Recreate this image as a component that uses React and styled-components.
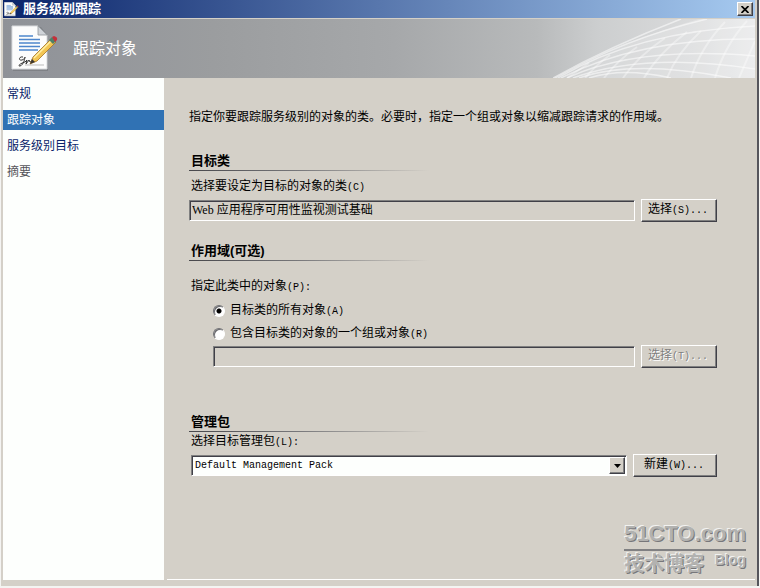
import React, { useState } from "react";
import styled, { createGlobalStyle, css } from "styled-components";

const face = "#d4d0c8";

const GlobalStyle = createGlobalStyle`
  * { box-sizing: border-box; }
  body {
    margin: 0;
    background: #f4f4f2;
    font: 12px/16px "Liberation Sans", "Noto Sans CJK SC", sans-serif;
    color: #000;
  }
  button, input, select { font: inherit; color: inherit; margin: 0; border-radius: 0; }
`;

const Desktop = styled.div`
  min-height: 100vh;
  display: flex;
  padding: 0 1px 2px;
`;

const Window = styled.div`
  flex: 1;
  display: flex;
  flex-direction: column;
  background: ${face};
  padding: 0 2px 6px;
  border-right: 2px solid #55555c;
`;

const TitleBar = styled.header`
  height: 18px;
  display: flex;
  align-items: center;
  gap: 4px;
  padding: 0 2px 0 1px;
  background: linear-gradient(90deg, #0a246a, #a6caf0);
  color: #fff;
`;

const WindowTitle = styled.h1`
  flex: 1;
  margin: 0;
  font-size: 13px;
  line-height: 18px;
  font-weight: 700;
`;

const raised = css`
  background: ${face};
  border: 1px solid;
  border-color: #fff #404048 #404048 #fff;
  box-shadow: inset -1px -1px #808080;
`;

const sunken = css`
  border: 1px solid;
  border-color: #808080 #fff #fff #808080;
  box-shadow: inset 1px 1px #404048;
`;

const CloseButton = styled.button`
  ${raised}
  width: 16px;
  height: 14px;
  padding: 0;
  display: grid;
  place-items: center;
`;

const Banner = styled.div`
  height: 60px;
  display: flex;
  align-items: center;
  border-top: 1px solid ${face};
  background: linear-gradient(90deg, #8f9298 0%, #9b9d9f 28%, #a6a8aa 52%, #b8babb 71%, #cccecf 79%, #dadbdc 92%, #e8e9ea 100%);
`;

const BannerTitle = styled.h2`
  flex: 1;
  margin: 0 0 0 14px;
  font-size: 16px;
  line-height: 24px;
  font-weight: 400;
  color: #fff;
`;

const DocIcon = styled.svg`
  width: ${(p) => p.$size}px;
  height: ${(p) => p.$size}px;
  flex: none;
  margin-left: ${(p) => p.$inset || 0}px;
`;

const Waves = styled.svg`
  width: 202px;
  height: 59px;
  flex: none;
`;

const Body = styled.div`
  flex: 1;
  display: flex;
`;

const Sidebar = styled.nav`
  width: 161px;
  flex: none;
  background: #fdfffd;
  padding-top: 6px;
  display: flex;
  flex-direction: column;
  gap: 6px;
`;

const SideLink = styled.a`
  height: 20px;
  padding: 0 4px;
  line-height: 21px;
  text-decoration: none;
  color: ${(p) => (p.$active ? "#fff" : p.$muted ? "#55555a" : "#0a246a")};
  background: ${(p) => (p.$active ? "#3072b4" : "transparent")};
`;

const Main = styled.main`
  flex: 1;
  min-width: 0;
  position: relative;
  margin-left: 3px;
  padding: 31px 38px 0 22px;
  border-bottom: 1px solid #fff;
`;

const Intro = styled.p`
  margin: 0 0 27px;
  white-space: nowrap;
`;

const Section = styled.section`
  margin-bottom: ${(p) => p.$after}px;
`;

const Heading = styled.h3`
  width: 240px;
  margin: 0 0 ${(p) => p.$after}px;
  padding: 0 2px;
  height: 19px;
  font-size: 13px;
  line-height: 17px;
  font-weight: 700;
  background: linear-gradient(90deg, #48484c, #77777a 45%, ${face}) left bottom / 100% 1px no-repeat;
`;

const Label = styled.label`
  display: block;
  padding-left: 2px;
`;

const Latin = styled.span`
  font-family: "Liberation Mono", monospace;
  font-size: 10px;
`;

const Fields = styled.fieldset`
  border: 0;
  margin: 0;
  padding: 0;
  min-width: 0;
`;

const Legend = styled.legend`
  padding: 0 2px;
  margin-bottom: 3px;
`;

const RadioRow = styled.label`
  display: flex;
  align-items: center;
  gap: 5px;
  height: 23px;
  padding-left: 24px;
`;

const Radio = styled.input`
  appearance: none;
  width: 12px;
  height: 12px;
  border-radius: 50%;
  border: 1px solid;
  border-color: #707074 #fff #fff #707074;
  background: ${(p) =>
    p.checked ? "radial-gradient(circle, #000 0 2px, #fff 3px)" : "#fff"};
  box-shadow: inset 1px 1px #68686c;
`;

const FieldRow = styled.div`
  display: flex;
  align-items: center;
  gap: 6px;
  margin-top: ${(p) => p.$before || 0}px;
  padding-left: ${(p) => p.$indent || 0}px;
`;

const TextBox = styled.input`
  ${sunken}
  flex: 1;
  min-width: 0;
  height: 21px;
  padding: 0 2px 3px;
  background: ${face};
  font-family: "Liberation Serif", "Noto Sans CJK SC", serif;
  outline: none;
`;

const PushButton = styled.button`
  ${raised}
  flex: none;
  width: ${(p) => p.$width || 76}px;
  height: 23px;
  padding: 0 2px 1px 0;
  line-height: 18px;
  &:disabled {
    color: #808080;
    text-shadow: 1px 1px #fff;
  }
`;

const Picker = styled.div`
  position: relative;
  flex: 1;
  min-width: 0;
  display: flex;
`;

const Select = styled.select`
  ${sunken}
  appearance: none;
  width: 100%;
  height: 21px;
  padding: 0 20px 0 3px;
  background: #fdfffd;
  font-family: "Liberation Mono", monospace;
  font-size: 10px;
  outline: none;
`;

const PickerArrow = styled.span`
  ${raised}
  position: absolute;
  top: 2px;
  right: 2px;
  bottom: 2px;
  width: 16px;
  display: grid;
  place-items: center;
  pointer-events: none;
`;

const Watermark = styled.div`
  position: absolute;
  right: 9px;
  bottom: 2px;
  color: #b2b2b0;
  text-shadow: -1px -1px #f2f2f0, 1px 1px #77777a;
  font-weight: 700;
`;

const Brand = styled.div`
  font-size: 22px;
  line-height: 30px;
  white-space: nowrap;
  border-bottom: 2px solid #808082;
`;

const BrandRow = styled.div`
  display: flex;
  justify-content: space-between;
  font-size: 14px;
  line-height: 18px;
`;

const BrandName = styled.span`
  font-size: 20px;
  line-height: 26px;
`;

function Document({ size, inset }) {
  return (
    <DocIcon $size={size} $inset={inset} viewBox="0 0 48 48" aria-hidden="true">
      <path d="M2 2h28l7 9v35H2z" fill="#6d6f73" opacity=".5" />
      <path d="M1 1h26l9 9v34H1z" fill="#fcfcfc" stroke="#d8dadd" />
      <path d="M27 1v9h9z" fill="#cfd3d8" stroke="#8f9499" strokeWidth=".8" />
      <path d="M8 11h14M8 14.500h21M8 18h21M8 21.500h21M8 25h19" stroke="#4e86cc" strokeWidth="1.700" />
      <path d="M12 32c-4-1-5 4-1 3 3-1 3-3 3-3s-1 8-5 9c-3 0 1-3 5-4l2-2-1 4 3-4 1 2 3-1" fill="none" stroke="#333" strokeWidth="1" />
      <path d="M14 40h19" stroke="#bbb" strokeWidth="1" />
      <path d="M19 39l3-7 19-19 4 4-19 19z" fill="#f3c553" stroke="#a37324" strokeWidth=".8" />
      <path d="M23 33l19-19" stroke="#fff0a5" strokeWidth="1.500" />
      <path d="M19 39l2-5 3 3z" fill="#3b3732" />
      <path d="M38 15l3-3 4 4-3 3z" fill="#4f8067" />
      <path d="M41 12l2-1q4 1 3 4l-2 2z" fill="#c5303a" />
    </DocIcon>
  );
}

function BannerWaves() {
  return (
    <Waves viewBox="0 0 202 59" aria-hidden="true">
      <path d="M0 59Q75 20 146 0H202V59Z" fill="#fff" opacity=".2" />
      <g fill="none" stroke="#fff" strokeWidth="1.500" opacity=".55">
        <path d="M0 59Q58 27 128 0" />
        <path d="M2 59Q70 20 154 0" />
        <path d="M5 59Q82 13 202 7" />
        <path d="M8 59Q87 19 202 20" />
        <path d="M14 59Q84 27 202 37" />
        <path d="M20 59Q92 33 202 50" />
        <path d="M26 59Q80 40 178 59" />
        <path d="M36 59Q70 48 118 59" />
      </g>
      <g fill="none" stroke="#fff" strokeWidth="2" opacity=".36">
        <path d="M14 59L36 44M32 59Q44 45 57 36M51 59Q64 42 84 28M70 59Q84 38 112 19M91 59Q105 35 134 13M114 59Q124 34 148 12M138 59Q148 28 172 3M162 59Q172 26 194 2M186 59L202 22" />
      </g>
    </Waves>
  );
}

const steps = [
  { name: "常规" },
  { name: "跟踪对象", active: true },
  { name: "服务级别目标" },
  { name: "摘要", muted: true },
];

export default function App() {
  const [scope, setScope] = useState("all");
  const [target, setTarget] = useState("Web 应用程序可用性监视测试基础");

  return (
    <Desktop>
      <GlobalStyle />
      <Window>
        <TitleBar>
          <Document size={15} />
          <WindowTitle>服务级别跟踪</WindowTitle>
          <CloseButton aria-label="关闭">
            <svg width="8" height="7" viewBox="0 0 8 7" aria-hidden="true">
              <path d="M.5 0L7.500 7M7.500 0L.5 7" stroke="#000" strokeWidth="1.700" />
            </svg>
          </CloseButton>
        </TitleBar>
        <Banner>
          <Document size={48} inset={8} />
          <BannerTitle>跟踪对象</BannerTitle>
          <BannerWaves />
        </Banner>
        <Body>
          <Sidebar>
            {steps.map((s) => (
              <SideLink key={s.name} href="#" $active={s.active} $muted={s.muted}>
                {s.name}
              </SideLink>
            ))}
          </Sidebar>
          <Main>
            <Intro>指定你要跟踪服务级别的对象的类。必要时，指定一个组或对象以缩减跟踪请求的作用域。</Intro>

            <Section $after={20}>
              <Heading $after={7}>目标类</Heading>
              <Label htmlFor="target">选择要设定为目标的对象的类<Latin>(C)</Latin></Label>
              <FieldRow $before={3}>
                <TextBox id="target" value={target} onChange={(e) => setTarget(e.target.value)} />
                <PushButton>选择<Latin>(S)...</Latin></PushButton>
              </FieldRow>
            </Section>

            <Section $after={45}>
              <Heading $after={17}>作用域(可选)</Heading>
              <Fields>
                <Legend>指定此类中的对象<Latin>(P):</Latin></Legend>
                <RadioRow>
                  <Radio type="radio" name="scope" checked={scope === "all"} onChange={() => setScope("all")} />
                  <span>目标类的所有对象<Latin>(A)</Latin></span>
                </RadioRow>
                <RadioRow>
                  <Radio type="radio" name="scope" checked={scope === "group"} onChange={() => setScope("group")} />
                  <span>包含目标类的对象的一个组或对象<Latin>(R)</Latin></span>
                </RadioRow>
                <FieldRow $indent={24}>
                  <TextBox aria-label="组或对象" disabled={scope === "all"} />
                  <PushButton disabled={scope === "all"}>选择<Latin>(T)...</Latin></PushButton>
                </FieldRow>
              </Fields>
            </Section>

            <Section $after={0}>
              <Heading $after={1}>管理包</Heading>
              <Label htmlFor="pack">选择目标管理包<Latin>(L):</Latin></Label>
              <FieldRow $before={3} $indent={2}>
                <Picker>
                  <Select id="pack">
                    <option>Default Management Pack</option>
                  </Select>
                  <PickerArrow>
                    <svg width="7" height="4" viewBox="0 0 7 4" aria-hidden="true">
                      <path d="M0 0h7L3.500 4z" fill="#000" />
                    </svg>
                  </PickerArrow>
                </Picker>
                <PushButton $width={84}>新建<Latin>(W)...</Latin></PushButton>
              </FieldRow>
            </Section>

            <Watermark>
              <Brand>51CTO.com</Brand>
              <BrandRow>
                <BrandName>技术博客</BrandName>
                <span>Blog</span>
              </BrandRow>
            </Watermark>
          </Main>
        </Body>
      </Window>
    </Desktop>
  );
}
